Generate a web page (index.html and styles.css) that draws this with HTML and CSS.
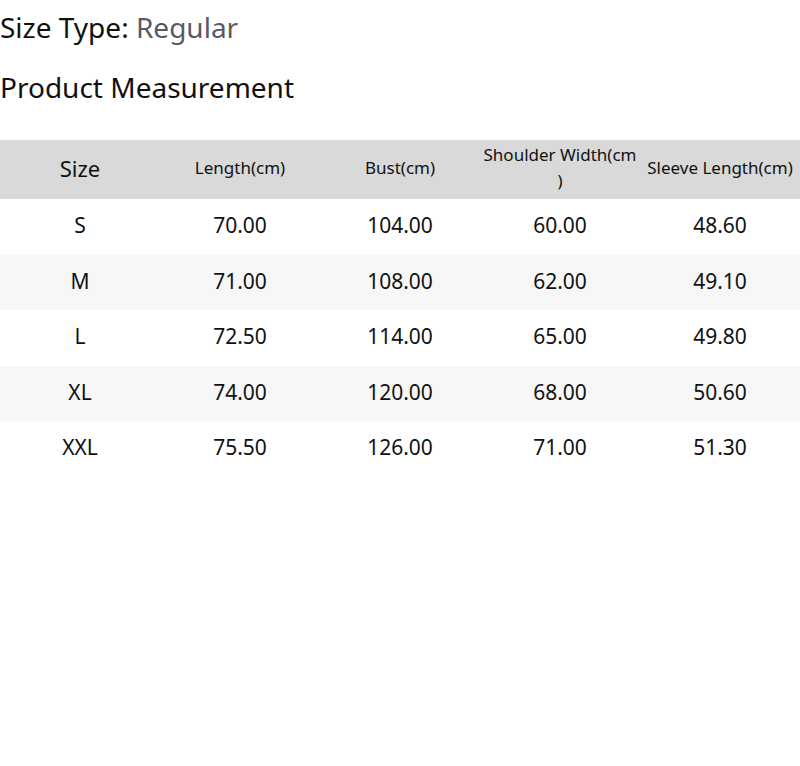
FILE: index.html
```html
<!DOCTYPE html>
<html>
<head>
<meta charset="utf-8">
<link rel="stylesheet" href="styles.css">
</head>
<body>
<div class="page">
  <div class="size-type"><span class="label">Size Type:</span> <span class="value">Regular</span></div>
  <h2 class="title">Product Measurement</h2>
  <table class="measure">
    <thead>
      <tr>
        <th class="first">Size</th>
        <th>Length(cm)</th>
        <th>Bust(cm)</th>
        <th>Shoulder Width(cm<wbr>)</th>
        <th>Sleeve Length(cm)</th>
      </tr>
    </thead>
    <tbody>
      <tr><td>S</td><td>70.00</td><td>104.00</td><td>60.00</td><td>48.60</td></tr>
      <tr><td>M</td><td>71.00</td><td>108.00</td><td>62.00</td><td>49.10</td></tr>
      <tr><td>L</td><td>72.50</td><td>114.00</td><td>65.00</td><td>49.80</td></tr>
      <tr><td>XL</td><td>74.00</td><td>120.00</td><td>68.00</td><td>50.60</td></tr>
      <tr><td>XXL</td><td>75.50</td><td>126.00</td><td>71.00</td><td>51.30</td></tr>
    </tbody>
  </table>
</div>
</body>
</html>
```
FILE: styles.css
```css
html, body {
  margin: 0;
  padding: 0;
  background: #fff;
}
body {
  font-family: "Noto Sans", "Open Sans", sans-serif;
  color: #111;
}
.page {
  width: 800px;
}
.size-type {
  font-size: 28px;
  line-height: 42px;
  padding-top: 6px;
}
.size-type .value {
  color: #595966;
}
.title {
  margin: 18px 0 0;
  font-size: 28px;
  font-weight: normal;
  line-height: 42px;
}
.measure {
  margin-top: 32px;
  width: 800px;
  border-collapse: collapse;
  table-layout: fixed;
}
.measure th {
  background: #d9d9d9;
  font-weight: normal;
  font-size: 17px;
  line-height: 26px;
  height: 56px;
  padding: 0 2px 3px;
  text-align: center;
}
.measure th.first {
  font-size: 22px;
}
.measure td {
  font-size: 21px;
  line-height: 31.5px;
  padding: 11px 5px 13px;
  text-align: center;
}
.measure tbody tr:nth-child(even) td {
  background: #f7f7f7;
}
```
